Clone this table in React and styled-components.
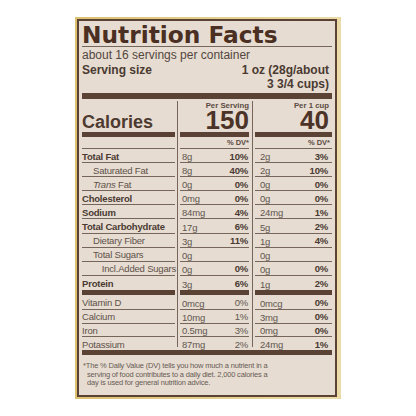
import React from "react"
import styled, { createGlobalStyle } from "styled-components"

const GlobalStyle = createGlobalStyle`
    body {
        margin: 0;
        background: #ffffff;
        font-family: "Liberation Sans", Arial, sans-serif;
    }
`

const brown = "#5a4234"
const rule = "#76655b"

const Page = styled.div`
    width: 416px;
    height: 416px;
    display: flex;
    align-items: center;
    justify-content: center;
`

const Frame = styled.div`
    width: 266px;
    height: 382px;
    box-sizing: border-box;
    padding: 2px 4px 2px 2px;
    background: linear-gradient(90deg, #dcc171, #ecdba8);
`

const Label = styled.div`
    height: 100%;
    box-sizing: border-box;
    border: 2px solid ${brown};
    background: #e6dcd1;
    padding: 0 3px;
    color: #4a3a31;
`

const Title = styled.h1`
    margin: 2px 0 0;
    font-family: "DejaVu Sans", sans-serif;
    font-weight: bold;
    font-size: 23.3px;
    line-height: 23px;
    color: #4a2f22;
    border-bottom: 1px solid ${rule};
`

const Servings = styled.div`
    margin-top: 2px;
    font-size: 12px;
    line-height: 13px;
    color: #54473f;
`

const ServingSize = styled.div`
    margin-top: 1px;
    display: flex;
    justify-content: space-between;
    font-size: 12px;
    font-weight: bold;
    line-height: 14px;
    padding-right: 3px;
`

const ServingAmount = styled.div`
    text-align: right;
`

const Bar = styled.div`
    height: ${p => p.$h}px;
    margin-top: ${p => p.$mt || 0}px;
    background: ${brown};
`

const Table = styled.div`
    display: grid;
    grid-template-columns: 93px 5px 69px 6px 77px;
`

const Divider = styled.div`
    grid-column: ${p => p.$col};
    grid-row: 1 / span 16;
    justify-self: center;
    width: 1px;
    margin: 2px 0 3px;
    background: ${rule};
`

const Cell = styled.div`
    grid-column: ${p => p.$col};
    box-sizing: border-box;
    height: ${p => p.$h}px;
    border-bottom: ${p => (p.$rule === "thick" ? `5px solid ${brown}` : p.$rule === "thin" ? `1px solid ${rule}` : "none")};
`

const NameCell = styled(Cell)`
    display: flex;
    align-items: center;
    padding-top: 1px;
    padding-left: ${p => (p.$indent || 0) * 11}px;
    font-size: 9.5px;
    line-height: 11px;
    letter-spacing: -0.2px;
    white-space: nowrap;
    font-weight: ${p => (p.$bold ? "bold" : "normal")};
    color: ${p => (p.$bold ? "#4a3a31" : "#605149")};
`

const ValueCell = styled(Cell)`
    display: flex;
    justify-content: space-between;
    align-items: center;
    padding: 1px ${p => (p.$col === 5 ? "4px 0 5px" : "1px 0 2px")};
    font-size: 9.5px;
    line-height: 11px;
    letter-spacing: -0.2px;
    white-space: nowrap;
`

const Amount = styled.span`
    color: #625650;
    padding-top: 1px;
`

const Percent = styled.span`
    font-weight: ${p => (p.$light ? "normal" : "bold")};
    color: ${p => (p.$light ? "#625650" : "#4a3a31")};
`

const CaloriesName = styled(Cell)`
    display: flex;
    align-items: flex-end;
    padding-bottom: 1px;
    font-size: 18px;
    line-height: 18px;
    font-weight: bold;
    color: #4d3a30;
`

const CaloriesValue = styled(Cell)`
    display: flex;
    flex-direction: column;
    justify-content: flex-end;
    align-items: flex-end;
    padding-bottom: 1px;
    padding-right: ${p => (p.$col === 5 ? 3 : 0)}px;
`

const Per = styled.div`
    font-size: 7.8px;
    line-height: 8px;
    font-weight: bold;
    color: #5a4b43;
`

const Big = styled.div`
    font-size: 26px;
    line-height: 21px;
    font-weight: bold;
    color: #4b3328;
`

const DvCell = styled(Cell)`
    display: flex;
    justify-content: flex-end;
    align-items: center;
    padding-right: ${p => (p.$col === 5 ? 2 : 0)}px;
    font-size: 7.5px;
    font-weight: bold;
    color: #5a4b43;
`

const Footnote = styled.p`
    margin: 7px 0 0;
    padding-left: 5px;
    text-indent: -4px;
    font-size: 7.5px;
    line-height: 8.7px;
    letter-spacing: -0.18px;
    white-space: nowrap;
    color: #675b55;
`

const nutrients = [
    { name: "Total Fat", bold: true, a: ["8g", "10%"], b: ["2g", "3%"] },
    { name: "Saturated Fat", indent: 1, a: ["8g", "40%"], b: ["2g", "10%"] },
    { name: <><i>Trans</i>&nbsp;Fat</>, indent: 1, a: ["0g", "0%"], b: ["0g", "0%"] },
    { name: "Cholesterol", bold: true, a: ["0mg", "0%"], b: ["0g", "0%"] },
    { name: "Sodium", bold: true, a: ["84mg", "4%"], b: ["24mg", "1%"] },
    { name: "Total Carbohydrate", bold: true, a: ["17g", "6%"], b: ["5g", "2%"] },
    { name: "Dietary Fiber", indent: 1, a: ["3g", "11%"], b: ["1g", "4%"] },
    { name: "Total Sugars", indent: 1, a: ["0g", ""], b: ["0g", ""] },
    { name: "Incl.Added Sugars", indent: 1.8, a: ["0g", "0%"], b: ["0g", "0%"] },
    { name: "Protein", bold: true, a: ["3g", "6%"], b: ["1g", "2%"], h: 19.6, rule: "thick" },
]

const vitamins = [
    { name: "Vitamin D", a: ["0mcg", "0%"], b: ["0mcg", "0%"], h: 14.7 },
    { name: "Calcium", a: ["10mg", "1%"], b: ["3mg", "0%"] },
    { name: "Iron", a: ["0.5mg", "3%"], b: ["0mg", "0%"] },
    { name: "Potassium", a: ["87mg", "2%"], b: ["24mg", "1%"], rule: "none" },
]

const Row = ({ item, h, rule, lightA }) => (
    <>
        <NameCell $col={1} $h={h} $rule={rule} $bold={item.bold} $indent={item.indent}>
            {item.name}
        </NameCell>
        <ValueCell $col={3} $h={h} $rule={rule}>
            <Amount>{item.a[0]}</Amount>
            <Percent $light={lightA}>{item.a[1]}</Percent>
        </ValueCell>
        <ValueCell $col={5} $h={h} $rule={rule}>
            <Amount>{item.b[0]}</Amount>
            <Percent>{item.b[1]}</Percent>
        </ValueCell>
    </>
)

export default function App() {
    return (
        <Page>
            <GlobalStyle />
            <Frame>
                <Label>
                    <Title>Nutrition Facts</Title>
                    <Servings>about 16 servings per container</Servings>
                    <ServingSize>
                        <span>Serving size</span>
                        <ServingAmount>
                            1 oz (28g/about
                            <br />
                            3 3/4 cups)
                        </ServingAmount>
                    </ServingSize>
                    <Bar $h={6} $mt={2} />
                    <Table>
                        <Divider $col={2} />
                        <Divider $col={4} />

                        <CaloriesName $col={1} $h={38} $rule="thick">Calories</CaloriesName>
                        <CaloriesValue $col={3} $h={38} $rule="thick">
                            <Per>Per Serving</Per>
                            <Big>150</Big>
                        </CaloriesValue>
                        <CaloriesValue $col={5} $h={38} $rule="thick">
                            <Per>Per 1 cup</Per>
                            <Big>40</Big>
                        </CaloriesValue>

                        <Cell $col={1} $h={12} $rule="thin" />
                        <DvCell $col={3} $h={12} $rule="thin">% DV*</DvCell>
                        <DvCell $col={5} $h={12} $rule="thin">% DV*</DvCell>

                        {nutrients.map((n, i) => (
                            <Row key={i} item={n} h={n.h || 14.1} rule={n.rule || "thin"} />
                        ))}
                        {vitamins.map((v, i) => (
                            <Row key={i} item={v} h={v.h || 13.4} rule={v.rule || "thin"} lightA />
                        ))}
                    </Table>
                    <Bar $h={4.5} />
                    <Footnote>
                        *The % Daily Value (DV) tells you how much a nutrient in a
                        <br />
                        serving of food contributes to a daily diet. 2,000 calories a
                        <br />
                        day is used for general nutrition advice.
                    </Footnote>
                </Label>
            </Frame>
        </Page>
    )
}
